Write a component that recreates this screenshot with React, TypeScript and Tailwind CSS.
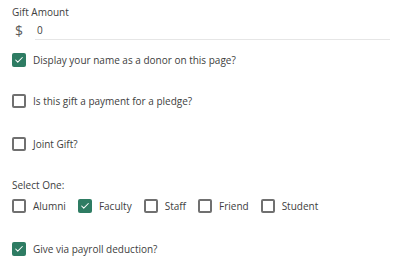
import { Check } from "lucide-react";

type BoxProps = { checked?: boolean; label: string };

function Box({ checked, label }: BoxProps) {
  return (
    <label className="flex items-center gap-[7px]">
      {checked ? (
        <span className="flex h-[14px] w-[14px] items-center justify-center rounded-[2px] bg-[#2e7c63]">
          <Check className="h-[10px] w-[10px] text-white" strokeWidth={2.5} />
        </span>
      ) : (
        <span className="h-[14px] w-[14px] rounded-[2px] border-2 border-[#707070] bg-white" />
      )}
      <span>{label}</span>
    </label>
  );
}

export default function App() {
  return (
    <div className="h-[274px] w-[400px] bg-white pl-[12px] pr-[10px] pt-[5px] text-[10px] leading-[14px] text-[#404040] [font-family:'Open_Sans',sans-serif]">
      <div>Gift Amount</div>
      <div className="mt-[4px] flex">
        <span className="mt-[1px] w-[23px] pl-[3px] text-[14px] leading-[14px] text-[#5c5c5c]">$</span>
        <div className="flex-1 border-b border-[#e6e6e6] pb-[2px] pl-[2px]">0</div>
      </div>
      <div className="mt-[13px]">
        <Box checked label="Display your name as a donor on this page?" />
      </div>
      <div className="mt-[27px]">
        <Box label="Is this gift a payment for a pledge?" />
      </div>
      <div className="mt-[29px]">
        <Box label="Joint Gift?" />
      </div>
      <div className="mt-[27px]">Select One:</div>
      <div className="mt-[7px] flex gap-[12px]">
        <Box label="Alumni" />
        <Box checked label="Faculty" />
        <Box label="Staff" />
        <Box label="Friend" />
        <Box label="Student" />
      </div>
      <div className="mt-[29px]">
        <Box checked label="Give via payroll deduction?" />
      </div>
    </div>
  );
}
